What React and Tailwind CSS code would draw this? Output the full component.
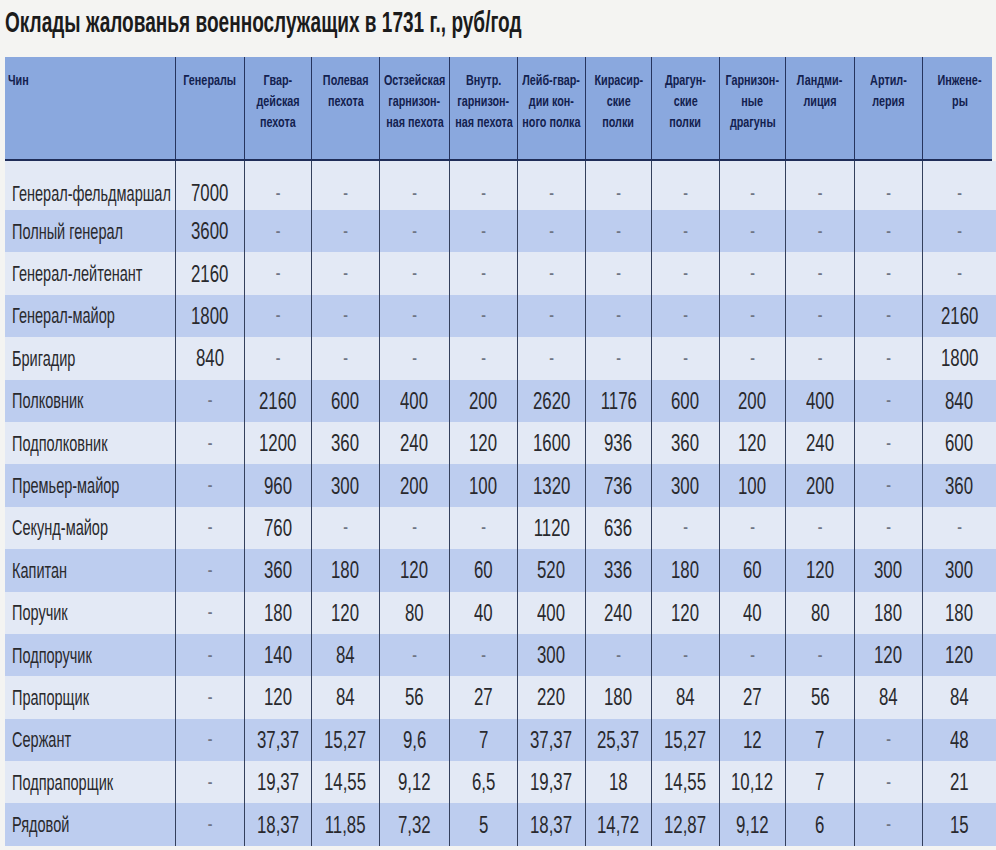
import React from 'react';

const cols = 'grid-cols-[170px_69px_67px_68px_70px_68px_68px_66px_68px_66px_69px_68px_74px]';

const heads = [
  ['Чин'],
  ['Генералы'],
  ['Гвар-', 'дейская', 'пехота'],
  ['Полевая', 'пехота'],
  ['Остзейская', 'гарнизон-', 'ная пехота'],
  ['Внутр.', 'гарнизон-', 'ная пехота'],
  ['Лейб-гвар-', 'дии кон-', 'ного полка'],
  ['Кирасир-', 'ские', 'полки'],
  ['Драгун-', 'ские', 'полки'],
  ['Гарнизон-', 'ные', 'драгуны'],
  ['Ландми-', 'лиция'],
  ['Артил-', 'лерия'],
  ['Инжене-', 'ры'],
];

const d = '-';
const rows = [
  ['Генерал-фельдмаршал', '7000', d, d, d, d, d, d, d, d, d, d, d],
  ['Полный генерал', '3600', d, d, d, d, d, d, d, d, d, d, d],
  ['Генерал-лейтенант', '2160', d, d, d, d, d, d, d, d, d, d, d],
  ['Генерал-майор', '1800', d, d, d, d, d, d, d, d, d, d, '2160'],
  ['Бригадир', '840', d, d, d, d, d, d, d, d, d, d, '1800'],
  ['Полковник', d, '2160', '600', '400', '200', '2620', '1176', '600', '200', '400', d, '840'],
  ['Подполковник', d, '1200', '360', '240', '120', '1600', '936', '360', '120', '240', d, '600'],
  ['Премьер-майор', d, '960', '300', '200', '100', '1320', '736', '300', '100', '200', d, '360'],
  ['Секунд-майор', d, '760', d, d, d, '1120', '636', d, d, d, d, d],
  ['Капитан', d, '360', '180', '120', '60', '520', '336', '180', '60', '120', '300', '300'],
  ['Поручик', d, '180', '120', '80', '40', '400', '240', '120', '40', '80', '180', '180'],
  ['Подпоручик', d, '140', '84', d, d, '300', d, d, d, d, '120', '120'],
  ['Прапорщик', d, '120', '84', '56', '27', '220', '180', '84', '27', '56', '84', '84'],
  ['Сержант', d, '37,37', '15,27', '9,6', '7', '37,37', '25,37', '15,27', '12', '7', d, '48'],
  ['Подпрапорщик', d, '19,37', '14,55', '9,12', '6,5', '19,37', '18', '14,55', '10,12', '7', d, '21'],
  ['Рядовой', d, '18,37', '11,85', '7,32', '5', '18,37', '14,72', '12,87', '9,12', '6', d, '15'],
];

const font = { fontFamily: '"Liberation Sans", Arial, sans-serif' };

export default function App() {
  return (
    <div className="w-[996px] h-[850px] overflow-hidden bg-[#f4f4f2]" style={font}>
      {/* Title */}
      <div className="h-[57px] pl-[5px] pt-[4px]">
        <span className="inline-block origin-left scale-x-[0.635] text-[30px] leading-[36px] font-bold text-[#1b1b1b] whitespace-nowrap">
          Оклады жалованья военнослужащих в 1731 г., руб/год
        </span>
      </div>

      <div className="pl-[5px]">
        {/* Header */}
        <div className={`grid ${cols} h-[104px] mr-[4px] bg-[#8aa8de] border-b-2 border-[#1f2d58]`}>
          {heads.map((h, i) => (
            <div
              key={i}
              className={`pt-[12px] flex flex-col leading-[21px] text-[15px] font-bold text-[#13214f] ${i === 0 ? 'items-start pl-[3px]' : 'items-center border-l-[1.5px] border-[#26345e]'}`}
            >
              {h.map((line, j) => (
                <span key={j} className={`inline-block scale-x-[0.72] whitespace-nowrap ${i === 0 ? 'origin-left' : ''}`}>
                  {line}
                </span>
              ))}
            </div>
          ))}
        </div>

        {/* Body */}
        {rows.map((r, ri) => (
          <div
            key={ri}
            className={`grid ${cols} ${ri === 0 ? 'h-[49px]' : 'h-[42.4px]'} ${ri % 2 === 0 ? 'bg-[#e3e9f5]' : 'bg-[#bdcdef]'}`}
          >
            {r.map((c, ci) => (
              <div
                key={ci}
                className={`flex items-center ${ri === 0 ? 'pt-[14px]' : ''} ${ci === 0 ? 'pl-[7px]' : 'justify-center border-l-[1.5px] border-[#34405c]'}`}
              >
                {c === d ? (
                  <span className="text-[14px] font-bold text-[#6f7585]">-</span>
                ) : (
                  <span
                    className={`inline-block whitespace-nowrap text-[#29292d] ${ci === 0 ? 'origin-left scale-x-[0.66] text-[22px]' : 'scale-x-[0.7] text-[24px]'}`}
                  >
                    {c}
                  </span>
                )}
              </div>
            ))}
          </div>
        ))}
      </div>
    </div>
  );
}
